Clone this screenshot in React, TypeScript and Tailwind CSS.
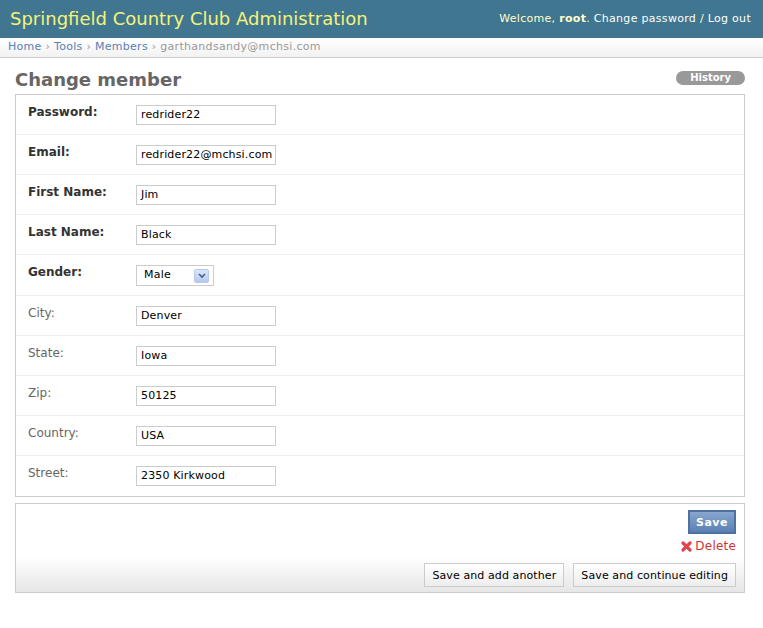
import React from "react";

const fields = [
  { label: "Password", value: "redrider22", required: true },
  { label: "Email", value: "redrider22@mchsi.com", required: true },
  { label: "First Name", value: "Jim", required: true },
  { label: "Last Name", value: "Black", required: true },
  { label: "Gender", value: "Male", required: true, select: true },
  { label: "City", value: "Denver" },
  { label: "State", value: "Iowa" },
  { label: "Zip", value: "50125" },
  { label: "Country", value: "USA" },
  { label: "Street", value: "2350 Kirkwood" },
];

const App = () => {
  return (
    <div className="min-h-screen bg-white font-['DejaVu_Sans',Verdana,sans-serif] text-[#333]">
      {/* header */}
      <div className="flex h-[38px] items-center justify-between bg-[#417690] pl-[10px] pr-[12px]">
        <h1 className="text-[18px] leading-none text-[#f4f379]">
          Springfield Country Club Administration
        </h1>
        <div className="text-[11px] tracking-[0.3px] text-[#ffc]">
          Welcome, <strong className="font-bold">root</strong>.{" "}
          <span className="text-white">Change password</span> /{" "}
          <span className="text-white">Log out</span>
        </div>
      </div>

      {/* breadcrumbs */}
      <div className="h-[20px] border-b border-[#ccc] bg-gradient-to-b from-white to-[#f2f2f2] pl-[8px] pt-[3px] text-[11px] leading-none tracking-[0.3px] text-[#999]">
        <span className="text-[#5b80b2]">Home</span> ›{" "}
        <span className="text-[#5b80b2]">Tools</span> ›{" "}
        <span className="text-[#5b80b2]">Members</span> › garthandsandy@mchsi.com
      </div>

      <div className="pl-[15px] pr-[18px] pt-[12px]">
        <div className="flex items-start justify-between">
          <h2 className="pt-[1px] text-[18px] font-bold leading-none text-[#666]">Change member</h2>
          <span className="mt-[1px] rounded-full bg-[#999] px-[14px] py-[2px] text-[10px] font-bold leading-[10px] text-white">
            History
          </span>
        </div>

        {/* fieldset */}
        <div className="mt-[5px] border border-[#ccc]">
          {fields.map((f, i) => (
            <div
              key={f.label}
              className={`flex px-[12px] pt-[10px] ${f.select ? "h-[41px]" : "h-[40px]"} ${
                i < fields.length - 1 ? "border-b border-[#eee]" : ""
              }`}
            >
              <label
                className={`w-[108px] text-[12px] leading-[14px] ${
                  f.required ? "font-bold text-[#333]" : "text-[#666]"
                }`}
              >
                {f.label}:
              </label>
              {f.select ? (
                <div className="flex h-[21px] w-[78px] items-center justify-between border border-[#ccc] pl-[7px] pr-[4px] text-[11px] tracking-[0.2px] text-black">
                  Male
                  <span className="flex h-[14px] w-[15px] items-center justify-center rounded-[2px] border border-[#b7c9ea] bg-gradient-to-b from-[#dbe6fb] to-[#b3c8f0]">
                    <svg width="8" height="6" viewBox="0 0 8 6">
                      <path d="M1 1 L4 4 L7 1" stroke="#4d6185" strokeWidth="1.6" fill="none" />
                    </svg>
                  </span>
                </div>
              ) : (
                <div className="h-[20px] w-[140px] border border-[#ccc] pl-[4px] text-[11px] leading-[18px] tracking-[0.15px] text-black">
                  {f.value}
                </div>
              )}
            </div>
          ))}
        </div>

        {/* submit row */}
        <div className="mt-[6px] flex h-[90px] flex-col items-end border border-[#ccc] bg-gradient-to-b from-white from-60% to-[#e6e6e6] pr-[8px] pt-[6px]">
          <button className="h-[24px] w-[48px] border-2 border-[#4d71a3] bg-gradient-to-b from-[#87a6cf] to-[#5b80b2] text-[11px] font-bold leading-none tracking-[0.5px] text-white">
            Save
          </button>
          <div className="mt-[6px] flex items-center gap-[3px] text-[12px] leading-none tracking-[0.2px] text-[#cc3434]">
            <svg width="11" height="11" viewBox="0 0 11 11">
              <path d="M2 2 L9 9 M9 2 L2 9" stroke="#e0454f" strokeWidth="3.2" strokeLinecap="round" />
            </svg>
            Delete
          </div>
          <div className="mt-[11px] flex gap-[9px]">
            <button className="h-[24px] border border-[#ccc] bg-gradient-to-b from-white to-[#ededed] px-[7px] text-[11px] leading-none tracking-[0.1px] text-black">
              Save and add another
            </button>
            <button className="h-[24px] border border-[#ccc] bg-gradient-to-b from-white to-[#ededed] px-[7px] text-[11px] leading-none tracking-[0.1px] text-black">
              Save and continue editing
            </button>
          </div>
        </div>
      </div>
    </div>
  );
};

export default App;
